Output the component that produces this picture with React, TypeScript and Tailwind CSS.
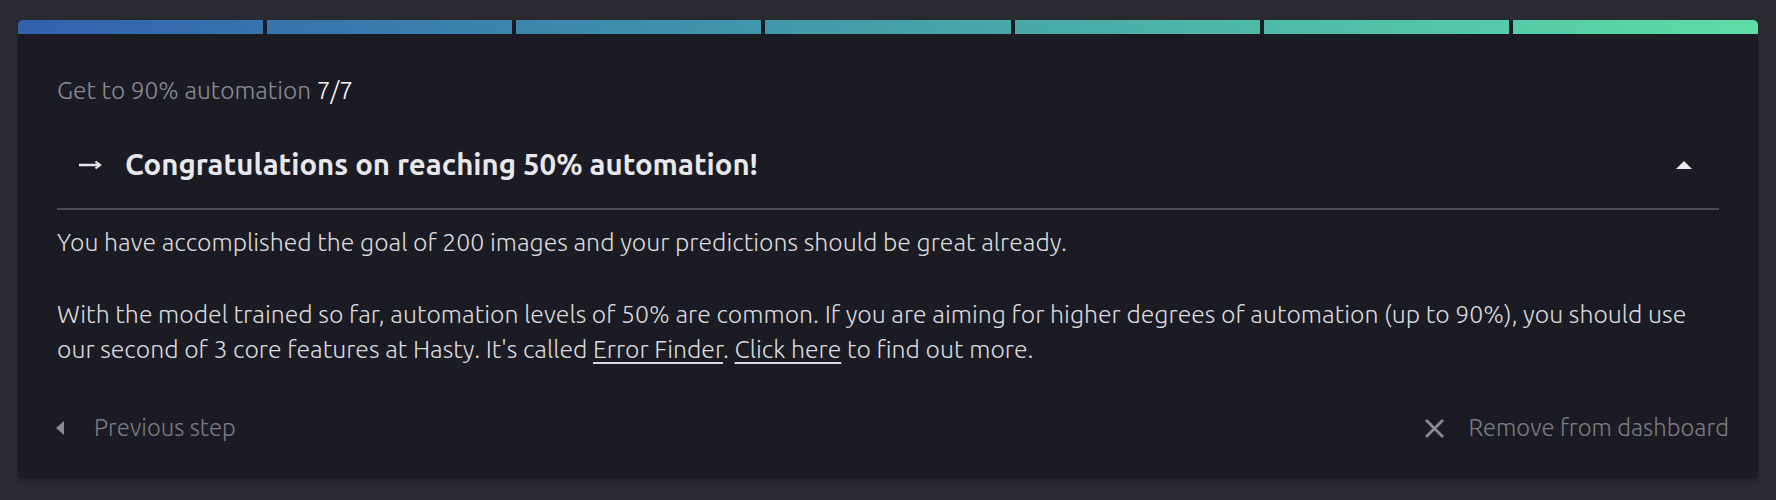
import React from "react";

export default function App() {
  return (
    <div
      className="min-h-[500px] bg-[#2a2b30] pt-5 px-[18px] pb-6"
      style={{ fontFamily: '"Ubuntu", "Open Sans", "Noto Sans", sans-serif' }}
    >
      <div className="rounded-[5px] bg-[#1b1c23] overflow-hidden shadow-[0_2px_4px_rgba(0,0,0,0.25)]">
        <div className="flex h-[14px] bg-gradient-to-r from-[#3361ad] via-[#45a0a9] to-[#5edca4]">
          <div className="flex-1" />
          <div className="w-1 bg-[#1b1c23]" />
          <div className="flex-1" />
          <div className="w-1 bg-[#1b1c23]" />
          <div className="flex-1" />
          <div className="w-1 bg-[#1b1c23]" />
          <div className="flex-1" />
          <div className="w-1 bg-[#1b1c23]" />
          <div className="flex-1" />
          <div className="w-1 bg-[#1b1c23]" />
          <div className="flex-1" />
          <div className="w-1 bg-[#1b1c23]" />
          <div className="flex-1" />
        </div>

        <div className="px-[39px] pt-[42px] pb-[31px]">
          <div className="text-[24.5px] leading-[28px] font-light text-[#8b8c93]">
            Get to 90% automation <span className="text-white">7/7</span>
          </div>

          <div className="mt-[33px] h-[56px] flex items-center pl-[21px] pr-[27px]">
            <svg width="24" height="12" viewBox="0 0 24 12" className="shrink-0">
              <path d="M1 6 H22" stroke="#e6e6ea" strokeWidth="2.4" fill="none" />
              <path d="M17.5 2.5 L22 6 L17.5 9.5" stroke="#e6e6ea" strokeWidth="2.2" fill="none" />
            </svg>
            <div className="ml-[23px] text-[29.4px] font-bold text-[#e8e8ec] flex-1 whitespace-nowrap">
              Congratulations on reaching 50% automation!
            </div>
            <svg width="16" height="8" viewBox="0 0 16 8" className="shrink-0">
              <path d="M0 8 L8 0 L16 8 Z" fill="#ececef" />
            </svg>
          </div>
          <div className="mt-[15px] h-[2px] bg-[#4a4b53]" />

          <div className="mt-[15px] text-[24.8px] leading-[35px] font-light text-[#dadade]">
            <p className="whitespace-nowrap">You have accomplished the goal of 200 images and your predictions should be great already.</p>
            <p className="mt-[37px]">
              <span className="block whitespace-nowrap">
                With the model trained so far, automation levels of 50% are common. If you are aiming for higher degrees of automation (up to 90%), you should use
              </span>
              <span className="block whitespace-nowrap">
                our second of 3 core features at Hasty. It's called <span className="underline underline-offset-4">Error Finder</span>.{" "}
                <span className="underline underline-offset-4">Click here</span> to find out more.
              </span>
            </p>
          </div>

          <div className="mt-[41px] h-[40px] flex items-center justify-between text-[23.8px] font-light text-[#7b7c83]">
            <div className="flex items-center">
              <svg width="8" height="14" viewBox="0 0 8 14" className="shrink-0 ml-[-1px]">
                <path d="M8 0 L0 7 L8 14 Z" fill="#8b8c93" />
              </svg>
              <span className="ml-[30px]">Previous step</span>
            </div>
            <div className="flex items-center mr-[-10px]">
              <svg width="21" height="21" viewBox="0 0 21 21" className="shrink-0">
                <path d="M2 2 L19 19 M19 2 L2 19" stroke="#8b8c93" strokeWidth="2.8" fill="none" />
              </svg>
              <span className="ml-[23px]">Remove from dashboard</span>
            </div>
          </div>
        </div>
      </div>
    </div>
  );
}
